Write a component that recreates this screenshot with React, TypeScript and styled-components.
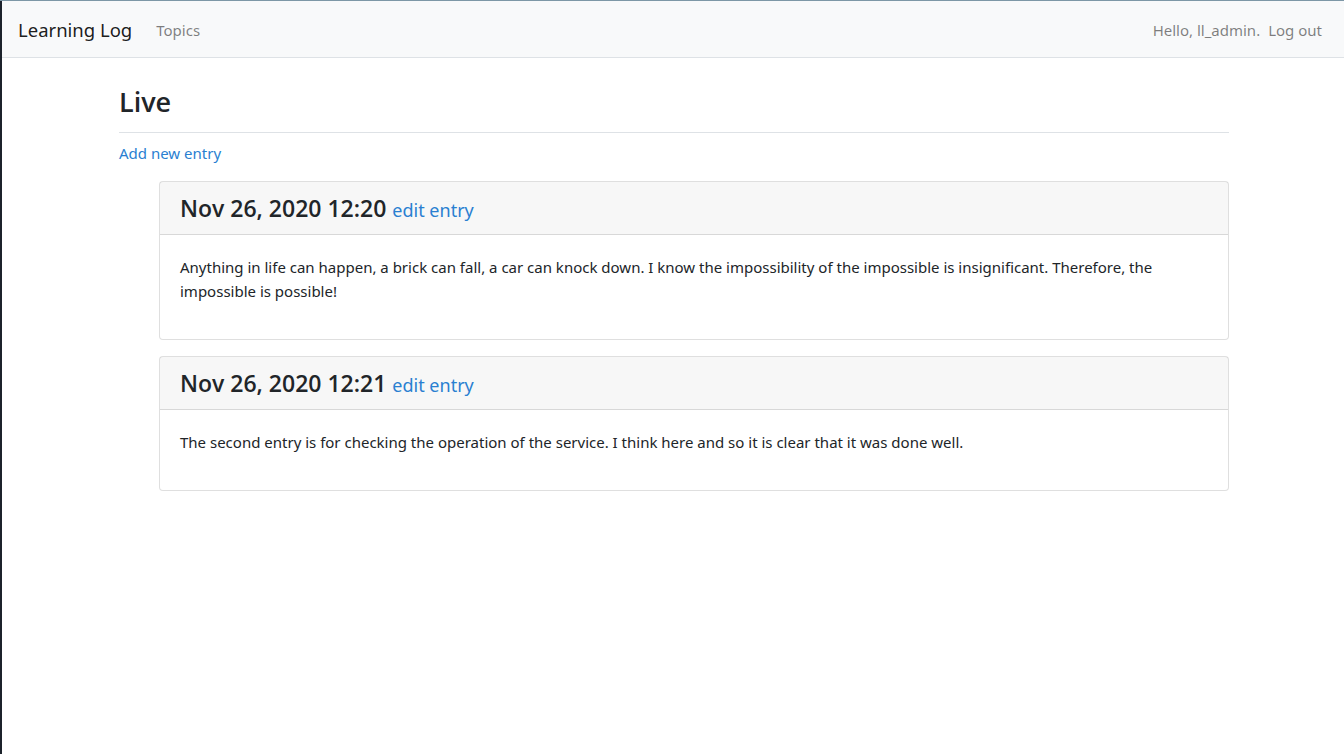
import React from "react";
import styled, { createGlobalStyle } from "styled-components";

const Global = createGlobalStyle`
  html, body { margin: 0; padding: 0; overflow: hidden; background: #fff; }
  body {
    font-family: "Noto Sans", "Open Sans", sans-serif;
    font-size: 15px;
    line-height: 1.5;
    color: #212529;
  }
  * { box-sizing: border-box; }
`;

const Frame = styled.div`
  display: flex;
  min-height: 754px;
  border-top: 1px solid #7d97a6;
`;

const Edge = styled.div`
  width: 2px;
  flex: 0 0 2px;
  background: #1c222b;
`;

const Page = styled.div`
  width: 1344px;
  flex: 0 0 1344px;
`;

const Navbar = styled.nav`
  display: flex;
  align-items: center;
  height: 57px;
  padding: 8px 16px;
  background: #f8f9fa;
  border-bottom: 1px solid #dee2e6;
`;

const Brand = styled.a`
  font-size: 18.5px;
  line-height: 30px;
  color: rgba(0, 0, 0, 0.9);
  margin-right: 16px;
  text-decoration: none;
  padding-top: 2px;
`;

const NavGroup = styled.div<{ $right?: boolean }>`
  display: flex;
  margin-left: ${(p) => (p.$right ? "auto" : "0")};
  padding-top: 2px;
`;

const NavLink = styled.a`
  padding: 8px;
  color: rgba(0, 0, 0, 0.5);
  text-decoration: none;
`;

const NavText = styled.span`
  padding: 8px 0 8px 8px;
  color: rgba(0, 0, 0, 0.5);
`;

const Container = styled.main`
  width: 1110px;
  margin: 22px auto 0;
`;

const PageHeader = styled.div`
  padding-bottom: 8px;
  margin-bottom: 8px;
  border-bottom: 1px solid #dee2e6;
`;

const Title = styled.h2`
  margin: 0;
  font-family: "Open Sans", "Noto Sans", sans-serif;
  font-size: 27px;
  line-height: 44.4px;
  font-weight: 600;
`;

const Link = styled.a`
  color: #2a7fd1;
  text-decoration: none;
`;

const Para = styled.p`
  margin: 0 0 16px;
  line-height: 24px;
`;

const Entries = styled.div`
  margin-left: 40px;
`;

const Card = styled.div`
  border: 1px solid rgba(0, 0, 0, 0.125);
  border-radius: 4px;
  margin-bottom: 16px;
  background: #fff;
`;

const CardHeader = styled.div`
  padding: 12px 20px;
  background: rgba(0, 0, 0, 0.03);
  border-bottom: 1px solid rgba(0, 0, 0, 0.125);
`;

const EntryTitle = styled.h4`
  margin: 0;
  font-family: "Open Sans", "Noto Sans", sans-serif;
  font-size: 23px;
  line-height: 28px;
  font-weight: 600;
`;

const Small = styled.small`
  font-family: "Noto Sans", sans-serif;
  font-size: 18px;
  font-weight: 400;
  line-height: 1;
`;

const CardBody = styled.div`
  padding: 20px;
`;

const entries = [
  {
    date: "Nov 26, 2020 12:20",
    text: "Anything in life can happen, a brick can fall, a car can knock down. I know the impossibility of the impossible is insignificant. Therefore, the impossible is possible!",
  },
  {
    date: "Nov 26, 2020 12:21",
    text: "The second entry is for checking the operation of the service. I think here and so it is clear that it was done well.",
  },
];

export default function App() {
  return (
    <>
      <Global />
      <Frame>
        <Edge />
        <Page>
          <Navbar>
            <Brand href="#">Learning Log</Brand>
            <NavGroup>
              <NavLink href="#">Topics</NavLink>
            </NavGroup>
            <NavGroup $right>
              <NavText>Hello, ll_admin.</NavText>
              <NavLink href="#">Log out</NavLink>
            </NavGroup>
          </Navbar>
          <Container>
            <PageHeader>
              <Title>Live</Title>
            </PageHeader>
            <Para>
              <Link href="#">Add new entry</Link>
            </Para>
            <Entries>
              {entries.map((e) => (
                <Card key={e.date}>
                  <CardHeader>
                    <EntryTitle>
                      {e.date}{" "}
                      <Small>
                        <Link href="#">edit entry</Link>
                      </Small>
                    </EntryTitle>
                  </CardHeader>
                  <CardBody>
                    <Para>{e.text}</Para>
                  </CardBody>
                </Card>
              ))}
            </Entries>
          </Container>
        </Page>
      </Frame>
    </>
  );
}
